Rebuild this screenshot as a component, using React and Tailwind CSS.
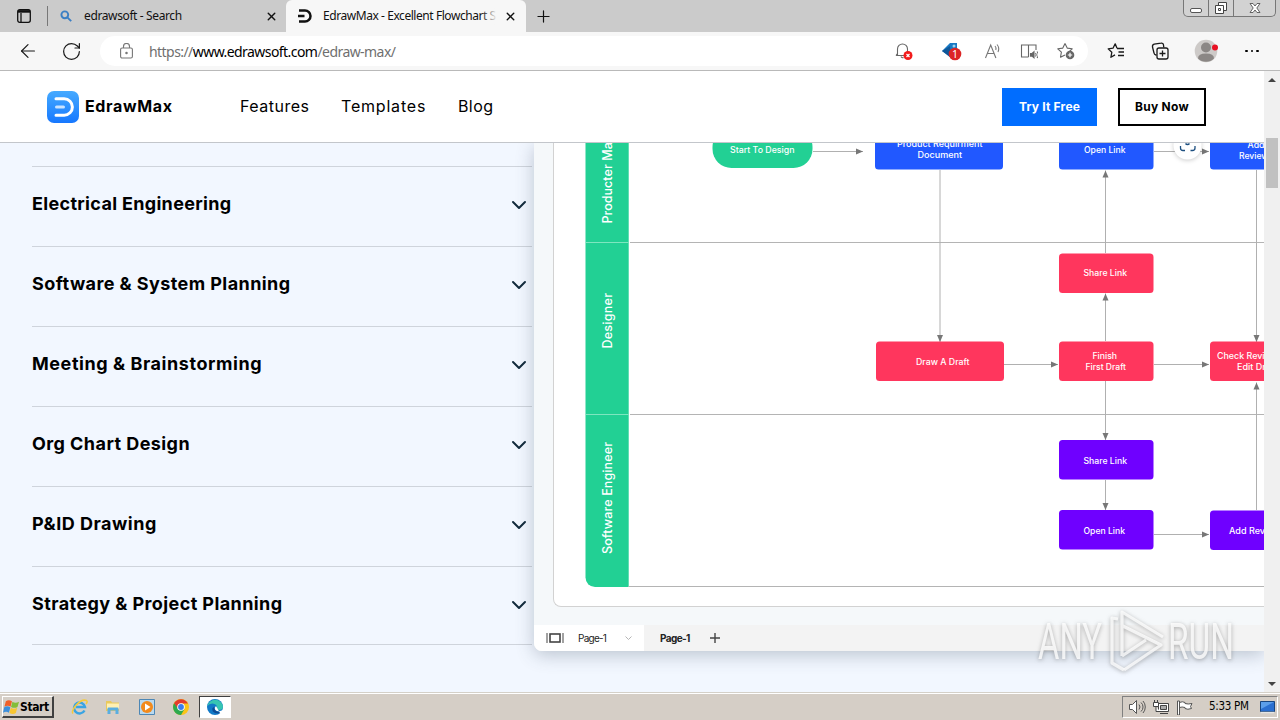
import { ArrowLeft, RotateCw, Plus, X } from 'lucide-react'

const categories = [
  { name: 'Electrical Engineering', cls: 'tracking-[0.32px]' },
  { name: 'Software & System Planning', cls: 'tracking-[0.42px]' },
  { name: 'Meeting & Brainstorming', cls: 'tracking-[0.56px]' },
  { name: 'Org Chart Design', cls: 'tracking-[0.43px]' },
  { name: 'P&ID Drawing', cls: 'tracking-[0.5px]' },
  { name: 'Strategy & Project Planning', cls: 'tracking-[0.41px]' },
]

const BLUE = '#2158ff'
const RED = '#ff365d'
const PURPLE = '#6f00ff'
const GREEN = '#22d094'

const nodes = [
  { x: 712.5, y: 128, w: 100, h: 40, r: 19, fill: GREEN, lines: [['Start To Design', 730, 153, 64.5]] },
  { x: 875, y: 129, w: 128, h: 40.5, fill: BLUE, lines: [['Product Requirment', 897, 147, 85.5], ['Document', 917.5, 157.5, 44.5]] },
  { x: 1059, y: 129, w: 94.5, h: 40.5, fill: BLUE, lines: [['Open Link', 1084, 152.5, 41.5]] },
  { x: 1210, y: 129, w: 128, h: 40.5, fill: BLUE, lines: [['Add', 1247.5, 148, 17], ['Review', 1239, 158.5, 29.5]] },
  { x: 1059, y: 253.5, w: 94.5, h: 39.5, fill: RED, lines: [['Share Link', 1083.5, 276, 43.5]] },
  { x: 876, y: 341.5, w: 128, h: 39.5, fill: RED, lines: [['Draw A Draft', 916, 364.5, 53.5]] },
  { x: 1059, y: 341.5, w: 94.5, h: 39.5, fill: RED, lines: [['Finish', 1092.5, 358.5, 24.5], ['First Draft', 1085.5, 369.5, 40.5]] },
  { x: 1210, y: 341.5, w: 128, h: 39.5, fill: RED, lines: [['Check Review', 1217, 359, 60], ['Edit Draft', 1237, 370, 40]] },
  { x: 1059, y: 440, w: 94.5, h: 39.5, fill: PURPLE, lines: [['Share Link', 1083.5, 463.5, 43.5]] },
  { x: 1059, y: 510, w: 94.5, h: 39.5, fill: PURPLE, lines: [['Open Link', 1083.5, 533.5, 41.5]] },
  { x: 1210, y: 510.5, w: 128, h: 39.5, fill: PURPLE, lines: [['Add Review', 1229, 534, 51]] },
]

// [x1, y1, x2, y2], the arrow head sits on the second point
const arrows = [
  [813, 151.5, 863, 151.5],
  [940, 170, 940, 342],
  [1105.5, 253, 1105.5, 170.5],
  [1105.5, 341, 1105.5, 293.5],
  [1154, 151.5, 1209, 151.5],
  [1256.5, 170, 1256.5, 342],
  [1004, 364.5, 1058, 364.5],
  [1154, 364.5, 1209, 364.5],
  [1105.5, 381, 1105.5, 440],
  [1105.5, 480, 1105.5, 510],
  [1154, 534.5, 1209, 534.5],
  [1256.5, 510, 1256.5, 382.5],
]

const lanes = [
  ['Producter Manager', 223.5, 116],
  ['Designer', 348.5, 55.5],
  ['Software Engineer', 554, 112],
]

function EdrawMark({ className, color }) {
  return (
    <svg className={className} viewBox="0 0 32 32" fill="none" stroke={color} strokeWidth="3" strokeLinecap="round">
      <path d="M9 7.8h8.2a8.2 8.2 0 0 1 0 16.4H9" />
      <path d="M9.5 16h7" strokeOpacity="0.75" />
    </svg>
  )
}

function WindowControls() {
  return (
    <div className="flex h-[17px] w-[93px] rounded-b-[5px] border border-t-0 border-[#777] bg-[#d2d2d2]">
      <div className="flex w-[25px] items-end justify-center border-r border-[#777] pb-[3px]">
        <div className="h-[5px] w-3 rounded-[2px] border border-[#555] bg-white" />
      </div>
      <div className="flex w-[25px] items-center justify-center border-r border-[#777]">
        <svg className="h-[15px] w-[15px]" viewBox="0 0 15 15" fill="#fff" stroke="#444" strokeWidth="1">
          <path d="M4.5 1.5h8v8h-8z" /><path d="M1.5 4.5h8v8h-8z" /><path d="M4.5 7.5h2v2h-2z" />
        </svg>
      </div>
      <div className="flex flex-1 items-center justify-center">
        <svg className="h-3 w-3" viewBox="0 0 12 12" fill="#fff" stroke="#555" strokeWidth="0.9">
          <path d="M1 1.5h3L6 4l2-2.5h3L7.8 6l3.2 4.5H8L6 8l-2 2.5H1L4.2 6z" />
        </svg>
      </div>
    </div>
  )
}

function TabStrip() {
  return (
    <div className="flex h-8 flex-shrink-0 bg-[#cbcbcb] text-[12px] text-[#111]">
      <div className="flex w-[48px] items-center justify-between pl-[17px]">
        <svg className="h-[14px] w-[14px]" viewBox="0 0 14 14" fill="none" stroke="#111" strokeWidth="1.3">
          <rect x="0.7" y="0.7" width="12.6" height="12.6" rx="2" /><path d="M1 2.4h12" strokeWidth="2.6" /><path d="M4 4v9" />
        </svg>
        <i className="h-5 w-px bg-[#777]" />
      </div>
      <div className="flex w-[238px] items-center pl-3">
        <svg className="h-3 w-3" viewBox="0 0 12 12" fill="none" stroke="#3b7fc4" strokeWidth="1.9">
          <circle cx="4.8" cy="4.8" r="3.4" /><path d="M7.3 7.3 11.2 11.2" />
        </svg>
        <span className="ml-3 flex-1 whitespace-nowrap tracking-[-0.38px]">edrawsoft - Search</span>
        <X className="mr-[8px] h-[13px] w-[13px]" strokeWidth={2.6} />
      </div>
      <div className="flex w-[240px] items-center rounded-t-md bg-[#f7f7f7] pl-[11px]">
        <svg className="h-4 w-4" viewBox="0 0 16 16" fill="none" stroke="#111" strokeWidth="2.5">
          <path d="M2 2.5h6a5.5 5.5 0 0 1 0 11H2M1 8h6.5" />
        </svg>
        <div className="relative ml-[10px] w-[174px] overflow-hidden whitespace-nowrap tracking-[-0.44px]">
          EdrawMax - Excellent Flowchart S
          <div className="absolute inset-y-0 right-0 w-4 bg-gradient-to-r from-transparent to-[#f7f7f7]" />
        </div>
        <X className="ml-[7px] h-[13px] w-[13px]" strokeWidth={2.6} />
      </div>
      <div className="flex flex-1 items-center pl-[8px]">
        <Plus className="h-[19px] w-[19px]" strokeWidth={1.5} />
      </div>
      <WindowControls />
      <div className="w-[4px]" />
    </div>
  )
}

function AddressBar() {
  return (
    <div className="flex h-[38px] flex-shrink-0 items-center bg-[#f7f7f7] pl-[17px] text-[#1a1a1a]">
      <ArrowLeft className="h-[22px] w-[22px]" strokeWidth={1.3} />
      <RotateCw className="ml-[22px] h-[21px] w-[21px]" strokeWidth={1.4} />
      <div className="ml-[18px] flex h-[30px] w-[988px] items-center rounded-full bg-white pl-5 text-[14px] text-[#6f6f6f]">
        <svg className="h-4 w-[13px]" viewBox="0 0 13 16" fill="none" stroke="#767676" strokeWidth="1.1">
          <rect x="0.6" y="5" width="11.8" height="10" rx="1.5" /><path d="M3.5 5V3.500a3 3 0 0 1 6 0V5" /><circle cx="6.5" cy="10" r="0.7" fill="#767676" />
        </svg>
        <span className="ml-4 flex-1 whitespace-nowrap tracking-[-0.56px]">https://<span className="text-black">www.edrawsoft.com</span>/edraw-max/</span>
        <svg className="mr-[28px] h-5 w-[18px]" viewBox="0 0 18 20" fill="none" stroke="#666" strokeWidth="1.1">
          <path d="M1 14.500h11M2.500 14.500V8a5 5 0 0 1 10 0v3M1 14.500l1.500-2M6 15.500a1.800 1.800 0 0 0 2.500 1" />
          <circle cx="13" cy="14.5" r="4.5" fill="#f21b1b" stroke="none" /><path d="m11.500 13 3 3m0-3-3 3" stroke="#fff" strokeWidth="1.2" />
        </svg>
        <svg className="mr-[22px] h-5 w-[21px]" viewBox="0 0 21 20">
          <path d="M1 10 9 2h7v12H7z" fill="#1979c4" /><path d="m1 10 8-5 1 12z" fill="#0f5799" /><circle cx="13" cy="5" r="1.5" fill="#9fd3ee" />
          <circle cx="14" cy="13" r="6.3" fill="#dc2525" /><text x="14" y="17" textAnchor="middle" fontSize="10.5" fill="#fff">1</text>
        </svg>
        <svg className="mr-[18px] h-[18px] w-[18px]" viewBox="0 0 18 18" fill="none" stroke="#777" strokeWidth="1.1">
          <path d="m1.500 16 5.200-13 5.200 13M3.300 11.500h6.800M11 4a4 4 0 0 1 .8 4M13 2.500a7 7 0 0 1 1 7.500" />
        </svg>
        <svg className="mr-[19px] h-[18px] w-[18px]" viewBox="0 0 18 18" fill="none" stroke="#666" strokeWidth="1.1">
          <path d="M8.500 3v12M8.500 3h-7v12h7M8.500 3h7.500v5" /><path d="M10.500 11.500h1.500l2-1.700v6l-2-1.700h-1.500z" fill="#666" /><path d="M15.500 11a3 3 0 0 1 0 3.500M17 9.500a5 5 0 0 1 0 6.500" />
        </svg>
        <svg className="mr-[13px] h-[18px] w-[18px]" viewBox="0 0 18 18" fill="none" stroke="#666" strokeWidth="1.1" strokeLinejoin="round">
          <path d="m8 1.500 2.200 4.600 5 .7-3.600 3.400.2 1M8 1.500 5.800 6.100l-5 .7 3.600 3.400-.9 5L8 12.900" />
          <circle cx="13" cy="13" r="4.3" fill="#666" stroke="none" /><path d="M13 10.800v4.400M10.800 13h4.400" stroke="#fff" strokeWidth="1.2" />
        </svg>
      </div>
      <svg className="ml-[19px] h-[18px] w-[18px]" viewBox="0 0 18 18" fill="none" stroke="#1a1a1a" strokeWidth="1.3" strokeLinejoin="round">
        <path d="M10 6.500h7M11.500 10h5.500M11 13.500h6M10 6.200 8.200 1.800 6 6.200l-4.800.7 3.600 3.400-.9 5L8 12.900" />
      </svg>
      <svg className="ml-[26px] h-[18px] w-[18px]" viewBox="0 0 18 18" fill="none" stroke="#1a1a1a" strokeWidth="1.3">
        <rect x="6" y="6" width="11" height="11" rx="2" /><path d="M11.500 8.500v6M8.500 11.500h6M5.500 13H5a2.500 2.500 0 0 1-2-2L1.500 5A2.500 2.500 0 0 1 3.200 2.200L10 1.200A2 2 0 0 1 12.500 3l.3 2.500" />
      </svg>
      <svg className="ml-[25px] h-6 w-6" viewBox="0 0 24 24">
        <circle cx="12" cy="12" r="11.3" fill="#cdcac8" /><circle cx="12" cy="8.5" r="5" fill="#8b8785" />
        <path d="M4 19.500Q4 14.500 12 14.500t8 5a11.300 11.300 0 0 1-16 0" fill="#8b8785" /><circle cx="21" cy="8.5" r="3" fill="#e81123" />
      </svg>
      <div className="ml-[27px] flex gap-[3px]">
        <i className="h-[2.5px] w-[2.5px] rounded-full bg-black" />
        <i className="h-[2.5px] w-[2.5px] rounded-full bg-black" />
        <i className="h-[2.5px] w-[2.5px] rounded-full bg-black" />
      </div>
    </div>
  )
}

function SiteHeader() {
  return (
    <header className="flex h-[72px] flex-shrink-0 items-center border-b border-[#c3c6cb] bg-white pl-[47px] text-black">
      <div className="h-8 w-8 rounded-[7px] bg-gradient-to-b from-[#46aaff] to-[#1677ff]">
        <EdrawMark className="h-8 w-8" color="#fff" />
      </div>
      <span className="ml-[6px] w-[155px] whitespace-nowrap pb-px text-[16px] font-bold tracking-[0.65px]">EdrawMax</span>
      <nav className="flex flex-1 whitespace-nowrap pb-px text-[16px]">
        <a className="w-[101px] tracking-[0.5px]">Features</a>
        <a className="w-[117px] tracking-[0.8px]">Templates</a>
        <a className="tracking-[0.4px]">Blog</a>
      </nav>
      <button className="h-[38px] w-[95px] bg-[#006dff] text-[12px] font-bold tracking-[0.2px] text-white">Try It Free</button>
      <button className="ml-[21px] mr-[58px] h-[38px] w-[88px] border-2 border-black text-[12px] font-bold tracking-[0.3px]">Buy Now</button>
    </header>
  )
}

function CategoryList() {
  return (
    <ul className="ml-8 w-[500px] flex-shrink-0 pt-[23px]">
      {categories.map((c) => (
        <li key={c.name} className="flex h-20 items-center justify-between border-t border-[#cfd4dc] pr-[5px] last:h-[79px] last:border-b last:pt-[2px]">
          <span className={`whitespace-nowrap pb-[6px] text-[18px] font-bold text-black ${c.cls}`}>{c.name}</span>
          <svg className="mb-[3px] h-[10px] w-4" viewBox="0 0 16 10" fill="none" stroke="#122b3d" strokeWidth="2" strokeLinecap="round" strokeLinejoin="round">
            <path d="m2 2 6 6 6-6" />
          </svg>
        </li>
      ))}
    </ul>
  )
}

function Arrow({ points: [x1, y1, x2, y2] }) {
  const angle = (Math.atan2(y2 - y1, x2 - x1) * 180) / Math.PI
  return (
    <g>
      <line x1={x1} y1={y1} x2={x2} y2={y2} stroke="#b0b0b0" strokeWidth="1" />
      <path d="M0 0-7-3v6z" fill="#777" transform={`translate(${x2} ${y2}) rotate(${angle})`} />
    </g>
  )
}

function Flowchart() {
  return (
    <svg className="block h-[463px] w-[710px]" viewBox="554 143 710 463">
      <path d="M585.500 143h43.200v444H595a9.500 9.500 0 0 1-9.500-9.500z" fill={GREEN} />
      <path d="M586 242.500h42.500M586 414.500h42.500" stroke="#7ee6bf" />
      <path d="M630 242.500h640M630 414.500h640M628.500 586.500h640" stroke="#b4b4b4" />
      {lanes.map(([label, y, len]) => (
        <text key={label} transform={`translate(612 ${y}) rotate(-90)`} fontSize="12.5" fontWeight="500" fill="#fff" textLength={len}>{label}</text>
      ))}
      {arrows.map((a) => <Arrow key={a.join()} points={a} />)}
      {nodes.map((n) => (
        <g key={`${n.x}-${n.y}`}>
          <rect x={n.x} y={n.y} width={n.w} height={n.h} rx={n.r || 3.5} fill={n.fill} />
          {n.lines.map(([t, x, y, len]) => (
            <text key={t} x={x} y={y} textLength={len} lengthAdjust="spacingAndGlyphs" fontSize="8.6" fontWeight="500" fill="#fff">{t}</text>
          ))}
        </g>
      ))}
      <circle cx="1187.5" cy="145.5" r="14" fill="#fff" style={{ filter: 'drop-shadow(0 1px 2px rgba(0,0,0,0.2))' }} />
      <path d="M1180.500 146v2a2.500 2.500 0 0 0 2.500 2.500h2M1190.500 150.500h2a2.500 2.500 0 0 0 2.500-2.500v-2M1185.500 143.500a2.500 2.500 0 0 0 4 0" fill="none" stroke="#1d4f80" strokeWidth="1.3" />
    </svg>
  )
}

function EditorPreview() {
  return (
    <div className="ml-[2px] flex h-[508px] flex-1 flex-col rounded-bl-lg bg-[#f5f8fa] shadow-[0_4px_18px_rgba(60,75,95,0.3)]">
      <div className="ml-[19px] h-[464px] overflow-hidden rounded-bl-lg border-b border-l border-[#d2d2d2] bg-white">
        <Flowchart />
      </div>
      <div className="mt-[18px] flex h-[26px] rounded-bl-lg bg-[#f3f3f3] text-[10px] text-[#222]">
        <div className="flex w-[110px] items-center rounded-bl-lg bg-white pl-3">
          <svg className="h-[10px] w-[18px]" viewBox="0 0 18 10" fill="none" stroke="#444">
            <path d="M1 0v10M17 0v10" /><rect x="4" y="1" width="10" height="8" strokeWidth="1.6" />
          </svg>
          <span className="ml-[14px] flex-1 whitespace-nowrap tracking-[-0.75px]">Page-1</span>
          <svg className="mr-3 h-[5px] w-[7px]" viewBox="0 0 7 5" fill="none" stroke="#b5b5b5"><path d="m.5.5 3 3 3-3" /></svg>
        </div>
        <div className="flex items-center pl-4">
          <span className="w-[48px] whitespace-nowrap font-bold tracking-[-0.6px]">Page-1</span>
          <svg className="ml-[2px] h-[10px] w-[10px]" viewBox="0 0 10 10" stroke="#444" strokeWidth="1.4"><path d="M5 0v10M0 5h10" /></svg>
        </div>
      </div>
    </div>
  )
}

function Watermark() {
  return (
    <svg className="absolute right-[42px] top-[533px] h-[72px] w-[204px]" viewBox="1034 604 204 72" style={{ filter: 'drop-shadow(0 1px 2px rgba(90,90,90,0.6))' }}>
      <g fill="#fff" fillOpacity="0.8" fontSize="50" fontFamily="Roboto, sans-serif" fontWeight="400">
        <text x="1038" y="659" textLength="64" lengthAdjust="spacingAndGlyphs">ANY</text>
        <text x="1168" y="659" textLength="66" lengthAdjust="spacingAndGlyphs">RUN</text>
      </g>
      <g fill="none" stroke="#fff" strokeOpacity="0.75" strokeWidth="3.2" strokeLinejoin="round">
        <path d="M1122 656v-44l41 25M1123 626l38 19-37 25M1122 656l24-16" />
        <path d="M1118 619l-6-1v45l12 7" />
      </g>
    </svg>
  )
}

function ScrollBar() {
  return (
    <div className="flex w-4 flex-shrink-0 flex-col items-center bg-[#f0f0f0] pt-[7px] pb-[6px]">
      <i className="border-x-4 border-b-4 border-x-transparent border-b-[#444]" />
      <div className="mt-[56px] h-[50px] w-3 bg-[#c1c1c1]" />
      <i className="mt-auto border-x-4 border-t-4 border-x-transparent border-t-[#444]" />
    </div>
  )
}

function FlagIcon() {
  return (
    <svg className="h-[20px] w-[17px] self-center" viewBox="0 0 18 20">
      <path d="M3 4q3-2.500 6.500 0L8 9.700q-3-2-6.500 0z" fill="#f0602a" /><path d="M10 4.500q3 2 7 0l-1.700 5.500q-3 1.800-6.800 0z" fill="#83bd3a" />
      <path d="M1.300 10.300q3-2.200 6.500 0L6.300 16q-3-2-6.300 0z" fill="#3c8fdc" /><path d="M8.300 10.800q3 2 6.800 0l-1.500 5.500q-3 2-6.800 0z" fill="#f8c632" />
    </svg>
  )
}

function Taskbar() {
  return (
    <div className="flex h-7 flex-shrink-0 items-start border-t border-[#d4d0c8] bg-[#d5cec6] pl-[2px] font-['DejaVu_Sans_Condensed','DejaVu_Sans',sans-serif] text-black shadow-[inset_0_1px_0_#fff]">
      <div className="mt-[3px] flex h-[22px] w-[52px] items-center border-b-2 border-r-2 border-l border-t border-b-[#404040] border-l-white border-r-[#404040] border-t-white text-[12px] font-bold">
        <FlagIcon />
        <span className="tracking-[-0.4px]">Start</span>
      </div>
      <svg className="ml-[17px] mt-[6px] h-4 w-[17px]" viewBox="0 0 17 16" fill="none">
        <path d="M13.500 11.500a5.500 5.500 0 1 1 .5-3.500H5" stroke="#39a4e3" strokeWidth="2.4" /><path d="M2 14.500C-1 12 9-1 15.500 1.500q1.500 1-.5 3.500" stroke="#f4ca3c" strokeWidth="1.5" />
      </svg>
      <svg className="ml-[17px] mt-[6px] h-4 w-4" viewBox="0 0 16 16">
        <path d="M1 2h5l1 1.500h7V12H1z" fill="#e9c95c" /><path d="M2 4.500h12V10H2z" fill="#fff0b3" /><path d="M2.500 15V9.500q0-1 1-1h9q1 0 1 1V15h-3v-3.500h-5V15z" fill="#5aaee0" />
      </svg>
      <svg className="ml-[18px] mt-[6px] h-4 w-4" viewBox="0 0 16 16">
        <path d="M.5.5h15v15H.5z" fill="#b9d9ef" stroke="#4d87b5" /><circle cx="8" cy="8" r="6" fill="#f28a1c" /><path d="M6 4.500v7L11.500 8z" fill="#fff" />
      </svg>
      <svg className="ml-[18px] mt-[6px] h-4 w-4" viewBox="0 0 16 16">
        <circle cx="8" cy="8" r="8" fill="#fbc417" /><path d="M8 8H4.500L1.100 4A8 8 0 0 0 8 16l3.500-6z" fill="#2da94f" /><path d="M1.100 4A8 8 0 0 1 14.900 4.500H8L4.500 9z" fill="#e33b2e" />
        <circle cx="8" cy="8" r="3.8" fill="#fff" /><circle cx="8" cy="8" r="2.9" fill="#3b7ded" />
      </svg>
      <div className="ml-[10px] mt-[3px] flex h-[22px] w-8 items-center justify-center border border-b-white border-l-[#404040] border-r-white border-t-[#404040] bg-white">
        <svg className="h-4 w-4" viewBox="0 0 16 16">
          <circle cx="8" cy="8" r="8" fill="#1179c7" /><path d="M.3 7A8 8 0 0 1 16 7.500q0 3.500-4 3.500-2.500 0-2.500-1.500 1-1 .5-2.500Q8.500 4.500 5.500 4.500 2 4.500.3 7" fill="#37c5b2" />
          <path d="M5.300 9.500Q5 14 10.500 14.500q2.500 0 4.500-2.500-1.500 1-3.500.8Q7 12 7.500 8 5.800 8 5.300 9.500" fill="#0b4a94" /><path d="M9 7q-2 1.500-1 3.500 1.500 2.500 5 1.500 2-.5 2.800-1.500L16 16l-3-2" fill="#fff" />
        </svg>
      </div>
      <div className="ml-auto mr-[2px] mt-[3px] flex h-[22px] w-[156px] items-center border border-b-white border-l-[#808080] border-r-white border-t-[#808080] pl-[6px] text-[11.5px]">
        <svg className="h-[14px] w-[17px]" viewBox="0 0 17 14" fill="#fff" stroke="#555" strokeWidth="1">
          <path d="M.5 4.500h3l4-4v13l-4-4h-3z" /><path d="M10 4.500a4 4 0 0 1 0 5M12 2.500a6 6 0 0 1 0 9M14 1a9 9 0 0 1 0 12" fill="none" />
        </svg>
        <svg className="ml-[7px] h-[15px] w-4" viewBox="0 0 16 15" fill="#fff" stroke="#444">
          <path d="M5.500 3.500h10v8h-10z" /><path d="M7.500 5.500h6v4h-6z" fill="#aaa" /><path d="M7 13.500h8M.5 2.500h5v4h-5zM1.500 0v2M4.500 0v2M3 6.500v5h4" />
        </svg>
        <svg className="ml-[8px] h-[15px] w-4" viewBox="0 0 16 15" fill="#fff" stroke="#555">
          <path d="M.5 1h2v14h-2zM2.500 2.500q3-1.500 5.500 0v1q3 1 7 0l-1.500 3 1 2q-4 1.500-6.500 0v-1q-3-1-5.500 0z" />
        </svg>
        <span className="ml-[16px] w-[51px] whitespace-nowrap tracking-[-0.3px]">5:33 PM</span>
        <svg className="h-[13px] w-[15px]" viewBox="0 0 15 13">
          <path d="M.5.500h14v10H.5z" fill="#2a6fd0" stroke="#17457f" /><path d="M1 1h13L1 8z" fill="#5b9eea" /><path d="M1 11.500h13" stroke="#e5e5e5" strokeWidth="1.5" />
        </svg>
      </div>
    </div>
  )
}

export default function App() {
  return (
    <div className="flex h-[720px] w-[1280px] flex-col overflow-hidden bg-white font-['Noto_Sans',sans-serif]">
      <TabStrip />
      <AddressBar />
      <div className="relative flex h-[622px] border-t border-[#b9b9b9]">
        <main className="flex w-[1264px] flex-col overflow-hidden bg-[#f2f7ff] font-['Inter',sans-serif]">
          <SiteHeader />
          <div className="flex flex-1 overflow-hidden">
            <CategoryList />
            <EditorPreview />
          </div>
        </main>
        <ScrollBar />
        <Watermark />
      </div>
      <Taskbar />
    </div>
  )
}
